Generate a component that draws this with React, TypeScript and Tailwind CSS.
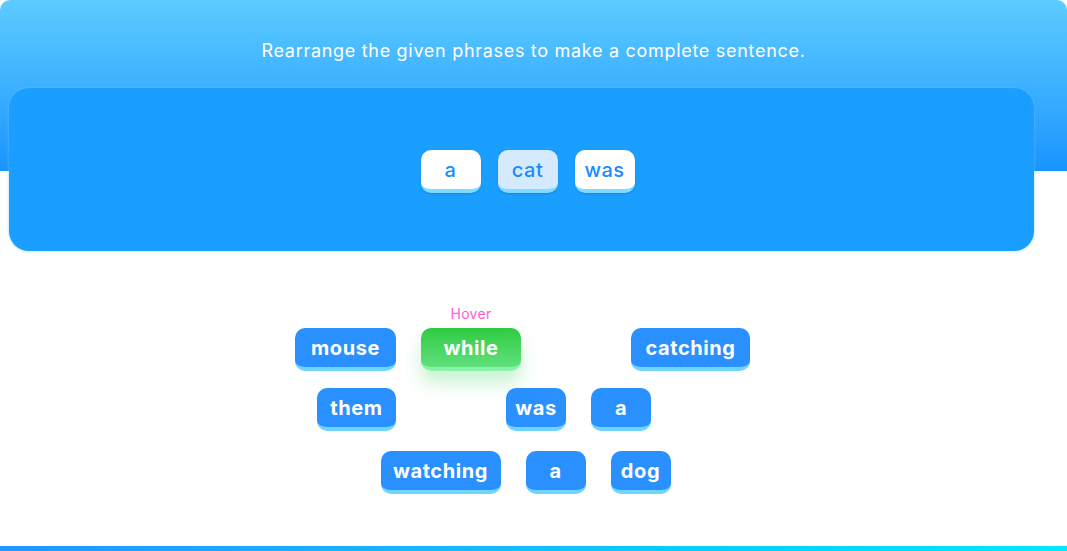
import React from "react";

type Word = { text: string; w: string; hover?: boolean };

const rows: { words: (Word | null)[]; cls: string; spacerEnd?: boolean }[] = [
    {
        cls: "mt-[77px] pr-[22px]",
        words: [
            { text: "mouse", w: "w-[101px]" },
            { text: "while", w: "w-[100px]", hover: true },
            null,
            { text: "catching", w: "w-[119px]" },
        ],
    },
    {
        cls: "mt-[17px] pr-[22px]",
        spacerEnd: true,
        words: [
            { text: "them", w: "w-[79px]" },
            null,
            { text: "was", w: "w-[60px]" },
            { text: "a", w: "w-[60px]" },
        ],
    },
    {
        cls: "mt-[20px] pr-[16px]",
        words: [
            { text: "watching", w: "w-[120px]" },
            { text: "a", w: "w-[60px]" },
            { text: "dog", w: "w-[60px]" },
        ],
    },
];

const answer = [
    { text: "a", active: false },
    { text: "cat", active: true },
    { text: "was", active: false },
];

const BankTile = ({ word }: { word: Word }) => {
    if (word.hover) {
        return (
            <div className={`relative ${word.w}`}>
                <span className="absolute left-0 right-0 -top-[25px] text-center text-[14px] tracking-[0.3px] text-[#ff5bd6]">Hover</span>
                <div className="h-[43px] rounded-[10px] border-b-4 border-[#86f3a6] bg-gradient-to-b from-[#2ccb3f] to-[#5fe07c] flex items-center justify-center text-white text-[20px] tracking-[0.6px] font-bold shadow-[0_12px_18px_rgba(60,210,90,0.28)]">
                    {word.text}
                </div>
            </div>
        );
    }
    return (
        <div className={`${word.w} h-[43px] rounded-[10px] border-b-4 border-[#6fd5ff] bg-[#2a90ff] flex items-center justify-center text-white text-[20px] tracking-[0.6px] font-bold`}>
            {word.text}
        </div>
    );
};

export default function App() {
    return (
        <div className="w-[1067px] h-[551px] bg-white flex flex-col overflow-hidden" style={{ fontFamily: "Inter, 'Open Sans', sans-serif" }}>
            {/* header */}
            <div className="h-[171px] shrink-0 rounded-t-[10px] bg-gradient-to-b from-[#5ccbff] to-[#1794ff] pt-[37px] text-center text-white text-[18px] tracking-[0.7px]">
                Rearrange the given phrases to make a complete sentence.
            </div>

            {/* answer panel */}
            <div className="ml-[9px] w-[1025px] h-[163px] -mt-[83px] shrink-0 rounded-[20px] bg-[#1a9eff] shadow-[0_0_3px_rgba(120,200,255,0.7)] flex items-center justify-center gap-[17px] pl-[12px] pt-[4px]">
                {answer.map((t, i) => (
                    <div
                        key={i}
                        className={`w-[60px] h-[43px] rounded-[10px] border-b-4 border-[#7fdcff] shadow-[0_1px_2px_rgba(0,60,140,0.25)] flex items-center justify-center text-[#1a8cff] text-[20px] tracking-[0.5px] font-medium ${t.active ? "bg-[#d6eaff]" : "bg-white"}`}
                    >
                        {t.text}
                    </div>
                ))}
            </div>

            {/* word bank */}
            {rows.map((row, ri) => (
                <div key={ri} className={`${row.cls} flex justify-center gap-[25px]`}>
                    {row.words.map((w, wi) =>
                        w ? <BankTile key={wi} word={w} /> : <div key={wi} className="w-[60px] h-[43px]" />
                    )}
                    {row.spacerEnd && <div className="w-[52px] h-[43px]" />}
                </div>
            ))}

            <div className="mt-auto h-[5px] shrink-0 bg-gradient-to-r from-[#2196ff] to-[#00e8ff]" />
        </div>
    );
}
